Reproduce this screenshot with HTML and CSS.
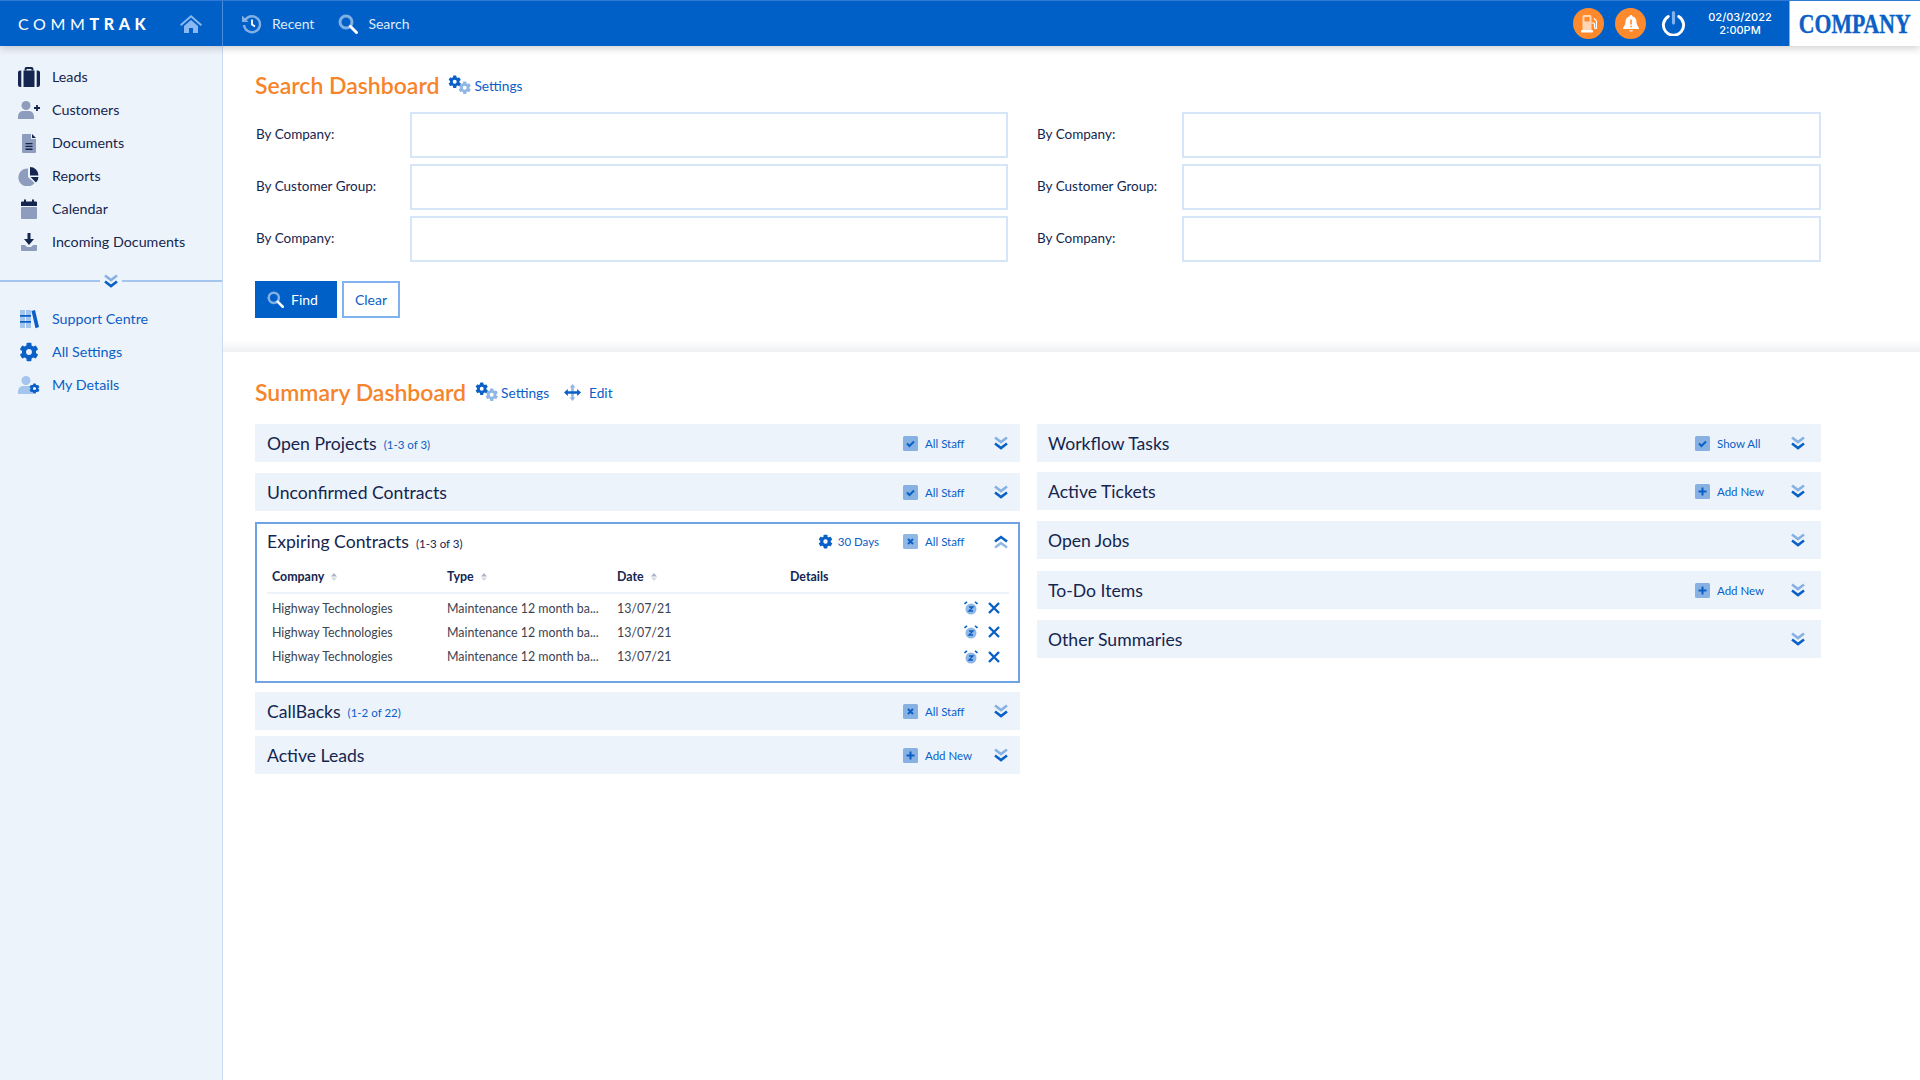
FILE: index.html
```html
<!DOCTYPE html>
<html lang="en">
<head>
<meta charset="UTF-8" />
<title>CommTrak Dashboard</title>
<link rel="stylesheet" href="styles.css">
</head>
<body>

<!-- Shared icons -->
<svg class="icon-defs" aria-hidden="true">
  <defs>
    <g id="gear-shape">
      <circle cx="12" cy="12" r="6" fill="none" stroke="currentColor" stroke-width="5"/>
      <g fill="currentColor">
        <rect x="9" y="1" width="6" height="5" rx="1"/>
        <rect x="9" y="18" width="6" height="5" rx="1"/>
        <rect x="9" y="1" width="6" height="5" rx="1" transform="rotate(60 12 12)"/>
        <rect x="9" y="18" width="6" height="5" rx="1" transform="rotate(60 12 12)"/>
        <rect x="9" y="1" width="6" height="5" rx="1" transform="rotate(120 12 12)"/>
        <rect x="9" y="18" width="6" height="5" rx="1" transform="rotate(120 12 12)"/>
      </g>
    </g>
    <symbol id="i-gear" viewBox="0 0 24 24"><use href="#gear-shape"/></symbol>
    <symbol id="i-gears" viewBox="0 0 24 20">
      <use href="#gear-shape" transform="scale(.56)"/>
      <g opacity=".45"><use href="#gear-shape" transform="translate(10 6) scale(.56)"/></g>
    </symbol>
    <symbol id="i-move" viewBox="0 0 20 20">
      <path fill="currentColor" opacity=".45" d="M10 0l3.400 4H6.600zM10 20l-3.400-4h6.800zM8.500 4h3v12h-3z"/>
      <path fill="currentColor" d="M0 10l4.500-4v2.500h11V6l4.500 4-4.500 4v-2.500h-11V14z"/>
    </symbol>
    <symbol id="i-search" viewBox="0 0 20 20">
      <circle cx="8" cy="8" r="6" fill="none" stroke="currentColor" stroke-width="3" opacity=".5"/>
      <path d="M12.500 12.500L18.500 18.500" stroke="currentColor" stroke-width="3" stroke-linecap="round"/>
    </symbol>
    <symbol id="i-double-down" viewBox="0 0 16 14">
      <path d="M2 1.500l6 4.500 6-4.500" fill="none" stroke="currentColor" stroke-width="2.600" opacity=".45"/>
      <path d="M2 7.500l6 4.500 6-4.500" fill="none" stroke="currentColor" stroke-width="2.600"/>
    </symbol>
    <symbol id="i-double-up" viewBox="0 0 16 14">
      <path d="M2 6.500L8 2l6 4.500" fill="none" stroke="currentColor" stroke-width="2.600"/>
      <path d="M2 12.500L8 8l6 4.500" fill="none" stroke="currentColor" stroke-width="2.600" opacity=".45"/>
    </symbol>
    <symbol id="i-box-check" viewBox="0 0 15 15">
      <rect width="15" height="15" rx="1.500" fill="currentColor" opacity=".45"/>
      <path d="M4 7.500l2.500 2.500L11 5.500" fill="none" stroke="currentColor" stroke-width="2"/>
    </symbol>
    <symbol id="i-box-x" viewBox="0 0 15 15">
      <rect width="15" height="15" rx="1.500" fill="currentColor" opacity=".45"/>
      <path d="M5 5l5 5M10 5l-5 5" fill="none" stroke="currentColor" stroke-width="2"/>
    </symbol>
    <symbol id="i-box-plus" viewBox="0 0 15 15">
      <rect width="15" height="15" rx="1.500" fill="currentColor" opacity=".45"/>
      <path d="M7.500 3.500v8M3.500 7.500h8" fill="none" stroke="currentColor" stroke-width="2"/>
    </symbol>
    <symbol id="i-snooze" viewBox="0 0 14 14">
      <circle cx="7" cy="8" r="5.500" fill="currentColor" opacity=".45"/>
      <path d="M.500 3L3 .800M13.500 3L11 .800" stroke="currentColor" stroke-width="1.600" fill="none"/>
      <path d="M5 6h4L5 10h4" stroke="currentColor" stroke-width="1.300" fill="none"/>
    </symbol>
    <symbol id="i-close" viewBox="0 0 12 12">
      <path d="M1 1l10 10M11 1L1 11" stroke="currentColor" stroke-width="2.400" fill="none"/>
    </symbol>
    <symbol id="i-sort" viewBox="0 0 6 8">
      <path fill="#a9b3c6" d="M3 0l3 3.500H0z"/>
      <path fill="#d5dae4" d="M0 4.500h6L3 8z"/>
    </symbol>
  </defs>
</svg>

<header class="topbar">
  <div class="brand">
    <span class="logo">COMM<b>TRAK</b></span>
    <svg class="home-icon" viewBox="0 0 22 18"><path fill="currentColor" d="M11 0l11 9.500-1.300 1.400L11 2.600 1.300 10.900 0 9.500zM4 11l7-6 7 6v7h-5v-5H9v5H4z"/></svg>
  </div>
  <nav class="top-nav">
    <a href="#">
      <svg class="top-icon" viewBox="0 0 20 20">
        <path d="M3.500 5.500A8 8 0 1 1 2 11" fill="none" stroke="currentColor" stroke-width="2.400" opacity=".5"/>
        <path d="M0 1.500L6.500 8H0z" fill="currentColor" opacity=".5"/>
        <path d="M10 5.500v5l3 2" fill="none" stroke="currentColor" stroke-width="1.800"/>
      </svg>Recent</a>
    <a href="#"><svg class="top-icon"><use href="#i-search"/></svg>Search</a>
  </nav>
  <div class="top-right">
    <span class="round-btn">
      <svg viewBox="0 0 16 18" width="16" height="18">
        <path fill="#fff" opacity=".65" d="M1.500 1.500A1.500 1.500 0 0 1 3 0h6a1.500 1.500 0 0 1 1.500 1.500V15h-9z"/>
        <rect x="3.500" y="2" width="5" height="4.500" fill="#ff8a2d"/>
        <rect y="15" width="12" height="2.500" rx="1" fill="#fff"/>
        <path d="M10.500 8h2a1 1 0 0 1 1 1v3.500a1 1 0 0 0 2 0V6L13 3.500" fill="none" stroke="#fff" stroke-width="1.200"/>
      </svg>
    </span>
    <span class="round-btn">
      <svg viewBox="0 0 16 18" width="16" height="18">
        <path fill="#fff" d="M8 0a1.200 1.200 0 0 1 1.200 1.300C12 2 13.500 4 13.500 7c0 3.500 2.500 5 2.500 6.500v.5H0v-.5C0 12 2.500 10.500 2.500 7c0-3 1.500-5 4.300-5.700A1.200 1.200 0 0 1 8 0z"/>
        <path fill="#fff" opacity=".6" d="M6 15h4a2 2 0 0 1-4 0z"/>
        <path d="M8 4.500v5M8 10.800v1.400" stroke="#ff8a2d" stroke-width="1.600"/>
      </svg>
    </span>
    <svg class="power-icon" viewBox="0 0 24 24">
      <path d="M7 5.200a9.700 9.700 0 1 0 10 0" fill="none" stroke="#fff" stroke-width="2.800" stroke-linecap="round"/>
      <path d="M12 1.500v10" stroke="#7fb2ee" stroke-width="3" stroke-linecap="round"/>
    </svg>
    <div class="clock">02/03/2022<br>2:00PM</div>
    <div class="company-logo"><span>COMPANY</span></div>
  </div>
</header>

<div class="page">
  <aside class="sidebar">
    <ul class="side-menu">
      <li><svg class="side-icon" viewBox="0 0 20 18"><path fill="currentColor" d="M6 3V1.500A1.500 1.500 0 0 1 7.500 0h5A1.500 1.500 0 0 1 14 1.500V3h-1.800V1.800H7.800V3z"/><path fill="currentColor" d="M0 5a2 2 0 0 1 2-2h1v15H2a2 2 0 0 1-2-2zM5 3h10v15H5zM17 3h1a2 2 0 0 1 2 2v11a2 2 0 0 1-2 2h-1z"/></svg>Leads</li>
      <li><svg class="side-icon" viewBox="0 0 22 18"><circle cx="8" cy="4.500" r="4.500" fill="#8e9dbd"/><path fill="#8e9dbd" d="M0 16c0-4 2.500-6 5-6h6c2.500 0 5 2 5 6v2H0z"/><path d="M19 4v6M16 7h6" stroke="currentColor" stroke-width="1.800"/></svg>Customers</li>
      <li><svg class="side-icon" viewBox="0 0 20 20"><path fill="#8e9dbd" d="M3 2a1 1 0 0 1 1-1h8v5h5v13a1 1 0 0 1-1 1H4a1 1 0 0 1-1-1z"/><path fill="currentColor" d="M13 1l4 4h-4zM6.500 10h7v1.300h-7zM6.500 12.800h7v1.300h-7zM6.500 15.600h7v1.300h-7z"/></svg>Documents</li>
      <li><svg class="side-icon" viewBox="0 0 20 20"><path fill="#8e9dbd" d="M9 2.500V11l6.500 6A9 9 0 1 1 9 2.500z"/><path fill="currentColor" d="M11 1a8.500 8.500 0 0 1 8.500 8.500H11zM11.500 11h8a8.500 8.500 0 0 1-2.500 5.500z"/></svg>Reports</li>
      <li><svg class="side-icon" viewBox="0 0 20 20"><rect x="2" y="8" width="16" height="12" rx="1" fill="#8e9dbd"/><path fill="currentColor" d="M3 2.500h2V.500h2v2h6V.500h2v2h2a1 1 0 0 1 1 1V7H2V3.500a1 1 0 0 1 1-1z"/></svg>Calendar</li>
      <li><svg class="side-icon" viewBox="0 0 20 20"><path fill="#8e9dbd" d="M2 13h4l2 2h4l2-2h4v5a1 1 0 0 1-1 1H3a1 1 0 0 1-1-1z"/><path fill="currentColor" d="M8.500 1h3v6H15l-5 6-5-6h3.500z"/></svg>Incoming Documents</li>
    </ul>
    <div class="side-divider"><svg class="chev"><use href="#i-double-down"/></svg></div>
    <ul class="side-menu side-links">
      <li><svg class="side-icon" viewBox="0 0 20 20"><path fill="#a4c6ee" d="M1 1h5v18H1zM7 1h5v18H7z"/><path fill="currentColor" d="M1 6h11v1.800H1zM1 12h11v1.800H1z"/><path fill="currentColor" d="M12.500 2l3.500-1 4 17-3.500 1.300z"/></svg>Support Centre</li>
      <li><svg class="side-icon"><use href="#i-gear"/></svg>All Settings</li>
      <li><svg class="side-icon" viewBox="0 0 22 18"><circle cx="8" cy="4.500" r="4.500" fill="#a4c6ee"/><path fill="#a4c6ee" d="M0 16c0-4 2.500-6 5-6h6c2.500 0 4 1 4 3v5H0z"/><svg x="11" y="7" width="11" height="11" viewBox="0 0 24 24"><use href="#gear-shape"/></svg></svg>My Details</li>
    </ul>
  </aside>

  <main class="content">
    <section class="search-section">
      <div class="title-row">
        <h2>Search Dashboard</h2>
        <a href="#" class="title-link"><svg class="gears"><use href="#i-gears"/></svg>Settings</a>
      </div>
      <div class="search-form">
        <div class="search-col">
          <label>By Company:</label><input type="text">
          <label>By Customer Group:</label><input type="text">
          <label>By Company:</label><input type="text">
        </div>
        <div class="search-col search-col-right">
          <label>By Company:</label><input type="text">
          <label>By Customer Group:</label><input type="text">
          <label>By Company:</label><input type="text">
        </div>
      </div>
      <div class="search-buttons">
        <button class="btn btn-find"><svg class="btn-icon"><use href="#i-search"/></svg>Find</button>
        <button class="btn btn-clear">Clear</button>
      </div>
    </section>

    <section class="summary-section">
      <div class="title-row">
        <h2>Summary Dashboard</h2>
        <a href="#" class="title-link"><svg class="gears"><use href="#i-gears"/></svg>Settings</a>
        <a href="#" class="title-link title-edit"><svg class="move"><use href="#i-move"/></svg>Edit</a>
      </div>
      <div class="summary-grid">
        <div class="panel-col panel-col-left">
          <div class="panel">
            <div class="panel-head">
              <h3>Open Projects</h3><span class="count">(1-3 of 3)</span>
              <a href="#" class="act"><svg class="box"><use href="#i-box-check"/></svg>All Staff</a>
              <svg class="chev"><use href="#i-double-down"/></svg>
            </div>
          </div>
          <div class="panel">
            <div class="panel-head">
              <h3>Unconfirmed Contracts</h3>
              <a href="#" class="act"><svg class="box"><use href="#i-box-check"/></svg>All Staff</a>
              <svg class="chev"><use href="#i-double-down"/></svg>
            </div>
          </div>
          <div class="panel panel-open">
            <div class="panel-head">
              <h3>Expiring Contracts</h3><span class="count count-dark">(1-3 of 3)</span>
              <a href="#" class="act-days"><svg class="box"><use href="#i-gear"/></svg>30 Days</a>
              <a href="#" class="act act-next"><svg class="box"><use href="#i-box-x"/></svg>All Staff</a>
              <svg class="chev"><use href="#i-double-up"/></svg>
            </div>
            <table class="contracts">
              <thead>
                <tr>
                  <th class="col-company">Company <svg class="sort"><use href="#i-sort"/></svg></th>
                  <th class="col-type">Type <svg class="sort"><use href="#i-sort"/></svg></th>
                  <th class="col-date">Date <svg class="sort"><use href="#i-sort"/></svg></th>
                  <th>Details</th>
                  <th class="col-tools"></th>
                </tr>
              </thead>
              <tbody>
                <tr>
                  <td>Highway Technologies</td><td>Maintenance 12 month ba...</td><td>13/07/21</td><td></td>
                  <td class="col-tools"><svg class="tool"><use href="#i-snooze"/></svg><svg class="tool-x"><use href="#i-close"/></svg></td>
                </tr>
                <tr>
                  <td>Highway Technologies</td><td>Maintenance 12 month ba...</td><td>13/07/21</td><td></td>
                  <td class="col-tools"><svg class="tool"><use href="#i-snooze"/></svg><svg class="tool-x"><use href="#i-close"/></svg></td>
                </tr>
                <tr>
                  <td>Highway Technologies</td><td>Maintenance 12 month ba...</td><td>13/07/21</td><td></td>
                  <td class="col-tools"><svg class="tool"><use href="#i-snooze"/></svg><svg class="tool-x"><use href="#i-close"/></svg></td>
                </tr>
              </tbody>
            </table>
          </div>
          <div class="panel">
            <div class="panel-head">
              <h3>CallBacks</h3><span class="count">(1-2 of 22)</span>
              <a href="#" class="act"><svg class="box"><use href="#i-box-x"/></svg>All Staff</a>
              <svg class="chev"><use href="#i-double-down"/></svg>
            </div>
          </div>
          <div class="panel">
            <div class="panel-head">
              <h3>Active Leads</h3>
              <a href="#" class="act"><svg class="box"><use href="#i-box-plus"/></svg>Add New</a>
              <svg class="chev"><use href="#i-double-down"/></svg>
            </div>
          </div>
        </div>

        <div class="panel-col panel-col-right">
          <div class="panel">
            <div class="panel-head">
              <h3>Workflow Tasks</h3>
              <a href="#" class="act"><svg class="box"><use href="#i-box-check"/></svg>Show All</a>
              <svg class="chev"><use href="#i-double-down"/></svg>
            </div>
          </div>
          <div class="panel">
            <div class="panel-head">
              <h3>Active Tickets</h3>
              <a href="#" class="act"><svg class="box"><use href="#i-box-plus"/></svg>Add New</a>
              <svg class="chev"><use href="#i-double-down"/></svg>
            </div>
          </div>
          <div class="panel">
            <div class="panel-head">
              <h3>Open Jobs</h3>
              <svg class="chev chev-end"><use href="#i-double-down"/></svg>
            </div>
          </div>
          <div class="panel">
            <div class="panel-head">
              <h3>To-Do Items</h3>
              <a href="#" class="act"><svg class="box"><use href="#i-box-plus"/></svg>Add New</a>
              <svg class="chev"><use href="#i-double-down"/></svg>
            </div>
          </div>
          <div class="panel">
            <div class="panel-head">
              <h3>Other Summaries</h3>
              <svg class="chev chev-end"><use href="#i-double-down"/></svg>
            </div>
          </div>
        </div>
      </div>
    </section>
  </main>
</div>

</body>
</html>
```

FILE: styles.css
```css
* {
  box-sizing: border-box;
}
html, body {
  height: 100%;
}
body {
  margin: 0;
  font-family: Lato, "Open Sans", sans-serif;
  color: #14264f;
  background: #fff;
  overflow: hidden;
  display: flex;
  flex-direction: column;
}
a {
  color: #0a60c6;
  text-decoration: none;
}
.icon-defs {
  position: absolute;
  width: 0;
  height: 0;
}

/* Top bar */
.topbar {
  height: 46px;
  flex: none;
  display: flex;
  align-items: center;
  background: #0060c8;
  color: #fff;
  border-top: 1px solid #2f7ad4;
  box-shadow: 0 2px 8px rgba(0,0,0,0.2);
  position: relative;
  z-index: 2;
}
.brand {
  width: 223px;
  height: 100%;
  flex: none;
  display: flex;
  align-items: center;
  padding-left: 18px;
  border-right: 1px solid #4a8cdc;
}
.logo {
  font-size: 16px;
  font-weight: 400;
  letter-spacing: 4.6px;
  width: 162px;
  white-space: nowrap;
}
.logo b {
  font-weight: 900;
}
.home-icon {
  width: 22px;
  height: 18px;
  color: #8ab8f0;
}
.top-nav {
  display: flex;
  align-items: center;
  padding-left: 19px;
}
.top-nav a {
  color: #dfebfa;
  font-size: 14px;
  display: flex;
  align-items: center;
  margin-right: 24px;
}
.top-icon {
  width: 20px;
  height: 20px;
  margin-right: 10px;
  color: #fff;
}
.top-right {
  margin-left: auto;
  height: 100%;
  display: flex;
  align-items: center;
}
.round-btn {
  width: 31px;
  height: 31px;
  border-radius: 50%;
  background: #ff8a2d;
  display: flex;
  align-items: center;
  justify-content: center;
  margin-right: 11px;
}
.power-icon {
  width: 25px;
  height: 25px;
  margin-left: 4px;
}
.clock {
  width: 98px;
  margin-left: 5px;
  text-align: center;
  font-family: Inter, sans-serif;
  font-size: 11px;
  font-weight: 500;
  line-height: 13px;
}
.company-logo {
  width: 131px;
  height: 100%;
  background: #fff;
  border-left: 1px solid #7fb2ee;
  color: #0a60c6;
  display: flex;
  align-items: center;
  justify-content: center;
  overflow: hidden;
}
.company-logo span {
  font-family: "Liberation Serif", serif;
  font-weight: 700;
  font-size: 27.500px;
  transform: scaleX(0.79);
  -webkit-text-stroke: 0.4px #0a60c6;
}

.page {
  flex: 1;
  display: flex;
  min-height: 0;
}

/* Sidebar */
.sidebar {
  width: 223px;
  flex: none;
  background: #edf3fb;
  border-right: 1px solid #c9dcf3;
  padding-top: 14px;
}
.side-menu {
  list-style: none;
  margin: 0;
  padding: 0;
}
.side-menu li {
  height: 33px;
  display: flex;
  align-items: center;
  padding-left: 18px;
  font-size: 14.300px;
  color: #14264f;
}
.side-icon {
  width: 22px;
  height: 20px;
  margin-right: 12px;
  color: #14264f;
  flex: none;
}
.side-divider {
  position: relative;
  height: 2px;
  margin-top: 22px;
  background: #a4c6ee;
  display: flex;
  justify-content: center;
  align-items: center;
}
.side-divider .chev {
  background: #edf3fb;
  width: 22px;
  padding: 0 3px;
  height: 14px;
  margin: 0;
  flex: none;
}
.side-links {
  margin-top: 20px;
}
.side-links li {
  color: #0a60c6;
}
.side-links .side-icon {
  color: #0a60c6;
}

/* Main */
.content {
  flex: 1;
  min-width: 0;
}
.search-section {
  padding: 24px 99px 34px 32px;
  background: linear-gradient(to bottom, #fff 294px, #eff0f2 100%);
}
.summary-section {
  padding: 25px 99px 0 32px;
}
.title-row {
  display: flex;
  align-items: center;
  height: 30px;
}
.title-row h2 {
  margin: 0;
  font-size: 23px;
  font-weight: 600;
  color: #f6842b;
}
.title-link {
  display: flex;
  align-items: center;
  font-size: 13.700px;
  margin-left: 9px;
}
.title-edit {
  margin-left: 15px;
}
.gears {
  width: 24px;
  height: 20px;
  margin-right: 2px;
}
.move {
  width: 17px;
  height: 17px;
  margin-right: 8px;
}

/* Search form */
.search-form {
  display: flex;
  gap: 29px;
  margin-top: 12px;
}
.search-col {
  display: grid;
  grid-template-columns: 155px 598px;
  row-gap: 6px;
  align-items: center;
}
.search-col-right {
  grid-template-columns: 145px 639px;
}
.search-col label {
  font-size: 13.500px;
  color: #14264f;
  padding: 0 0 2px 1px;
}
.search-col-right label {
  padding-left: 0;
}
.search-col input {
  height: 46px;
  width: 100%;
  border: 2px solid #d6e5f7;
  background: #fff;
}
.search-buttons {
  display: flex;
  gap: 5px;
  margin-top: 19px;
}
.btn {
  height: 37px;
  font-family: inherit;
  font-size: 14px;
  display: flex;
  align-items: center;
  justify-content: center;
  padding: 0;
}
.btn-find {
  width: 82px;
  background: #0060c8;
  border: none;
  color: #fff;
  justify-content: flex-start;
  padding-left: 12px;
}
.btn-icon {
  width: 17px;
  height: 17px;
  margin-right: 7px;
  color: #fff;
}
.btn-clear {
  width: 58px;
  background: #fff;
  border: 2px solid #7fb2ee;
  color: #0a60c6;
}

/* Summary panels */
.summary-grid {
  display: flex;
  gap: 17px;
  margin-top: 17px;
  align-items: flex-start;
}
.panel-col {
  display: flex;
  flex-direction: column;
  gap: 11px;
}
.panel-col-left {
  width: 765px;
  --act-width: 90px;
  --head-right: 11px;
}
.panel-col-right {
  width: 784px;
  --act-width: 95px;
  --head-right: 15px;
}
.panel {
  background: #edf3fb;
}
.panel-col-left .panel:nth-child(3) {
  margin-bottom: -2px;
}
.panel-col-left .panel:nth-child(4) {
  margin-bottom: -5px;
}
.panel-col-right .panel:nth-child(1) {
  margin-bottom: -1px;
}
.panel-col-right .panel:nth-child(3) {
  margin-bottom: 1px;
}
.panel-head {
  height: 38px;
  display: flex;
  align-items: center;
  padding: 0 var(--head-right) 0 12px;
}
.panel-head h3 {
  margin: 0;
  font-size: 17.600px;
  font-weight: 400;
  color: #14264f;
}
.panel-col-right .panel-head {
  padding-left: 11px;
}
.count {
  font-size: 11.500px;
  color: #0a60c6;
  margin-left: 7px;
  margin-top: 3px;
}
.count-dark {
  color: #14264f;
}
.act, .act-days {
  display: flex;
  align-items: center;
  font-size: 11.500px;
}
.act {
  width: var(--act-width);
  margin-left: auto;
}
.act-days {
  margin-left: auto;
}
.act-days .box {
  margin-right: 5px;
}
.act-next {
  margin-left: 24px;
}
.box {
  width: 15px;
  height: 15px;
  margin-right: 7px;
}
.chev {
  width: 16px;
  height: 14px;
  color: #0a60c6;
  flex: none;
}
.chev-end {
  margin-left: auto;
}

/* Open panel with the table */
.panel-open {
  background: #fff;
  border: 2px solid #6fa3e3;
  height: 161px;
}
.panel-open .panel-head {
  height: 35px;
  padding: 0 9px 0 10px;
}
.contracts {
  border-collapse: collapse;
  width: 742px;
  margin: 0 0 0 10px;
  table-layout: fixed;
  font-size: 12.400px;
}
.contracts th {
  text-align: left;
  font-weight: 700;
  color: #14264f;
  height: 34px;
  padding: 2px 0 0 5px;
  border-bottom: 2px solid #edf3fb;
}
.contracts td {
  height: 24.500px;
  padding: 0 0 0 5px;
  color: #3c4352;
}
.contracts tbody tr:first-child td {
  height: 27px;
  padding-top: 2.500px;
}
.col-company {
  width: 175px;
}
.col-type {
  width: 170px;
}
.col-date {
  width: 173px;
}
.col-tools {
  width: 60px;
}
.contracts td.col-tools {
  text-align: right;
  padding-right: 9px;
  line-height: 0;
}
.sort {
  width: 6px;
  height: 8px;
  margin-left: 4px;
}
.tool {
  width: 14px;
  height: 14px;
  color: #0a60c6;
  margin-right: 10px;
  vertical-align: middle;
}
.tool-x {
  width: 12px;
  height: 12px;
  color: #0a60c6;
  vertical-align: middle;
}
```
